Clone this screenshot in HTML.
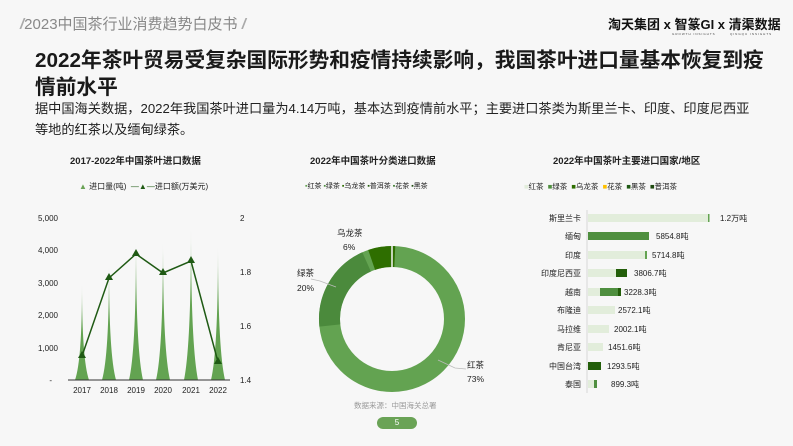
<!DOCTYPE html>
<html><head><meta charset="utf-8"><style>
body{margin:0;width:793px;height:446px;background:#f7f7f7;font-family:"Liberation Sans","Noto Sans CJK SC",sans-serif;position:relative;overflow:hidden;color:#222}
.a{position:absolute;white-space:nowrap}
</style></head><body>
<div class="a" style="left:20px;top:13px;font-size:15px;color:#888"><span style="color:#aaa;font-style:italic;font-weight:bold">/</span>2023中国茶行业消费趋势白皮书 <span style="color:#aaa;font-style:italic;font-weight:bold">/</span></div>
<div class="a" style="left:608px;top:14px;font-size:13px;font-weight:bold;color:#111">淘天集团 x 智篆GI x 清渠数据</div>
<div class="a" style="left:672px;top:32px;font-size:3px;color:#444;letter-spacing:1px">GROWTH INSIGHTS</div>
<div class="a" style="left:730px;top:32px;font-size:3px;color:#444;letter-spacing:1px">QINGQU INSIGHTS</div>
<div class="a" style="left:35px;top:47px;font-size:20.7px;font-weight:bold;line-height:27px;color:#1a1a1a;white-space:normal;width:745px">2022年茶叶贸易受复杂国际形势和疫情持续影响，我国茶叶进口量基本恢复到疫情前水平</div>
<div class="a" style="left:35px;top:98px;font-size:13.2px;line-height:21px;color:#222;white-space:normal;width:722px">据中国海关数据，2022年我国茶叶进口量为4.14万吨，基本达到疫情前水平；主要进口茶类为斯里兰卡、印度、印度尼西亚等地的红茶以及缅甸绿茶。</div>

<div class="a" style="left:70px;top:153px;font-size:9.5px;font-weight:bold">2017-2022年中国茶叶进口数据</div>
<div class="a" style="left:79px;top:181px;font-size:8px"><span style="color:#6aa356">▲</span> 进口量(吨) &nbsp;<span style="color:#1f5a14">—▲—</span>进口额(万美元)</div>
<svg class="a" style="left:0;top:0" width="793" height="446">
<g font-size="8" fill="#222" font-family="Liberation Sans,sans-serif">
<text x="58" y="221" text-anchor="end">5,000</text><text x="58" y="253" text-anchor="end">4,000</text><text x="58" y="286" text-anchor="end">3,000</text><text x="58" y="318" text-anchor="end">2,000</text><text x="58" y="351" text-anchor="end">1,000</text><text x="52" y="383" text-anchor="end">-</text>
<text x="240" y="221">2</text><text x="240" y="275">1.8</text><text x="240" y="329">1.6</text><text x="240" y="383">1.4</text>
<text x="82" y="393" text-anchor="middle">2017</text><text x="109" y="393" text-anchor="middle">2018</text><text x="136" y="393" text-anchor="middle">2019</text><text x="163" y="393" text-anchor="middle">2020</text><text x="191" y="393" text-anchor="middle">2021</text><text x="218" y="393" text-anchor="middle">2022</text>
</g>
<g fill="#63a351">
<path d="M75 380 Q82 360 82 285 Q82 360 89 380Z"/><path d="M102 380 Q109 355 109 267 Q109 355 116 380Z"/><path d="M129 380 Q136 350 136 242 Q136 350 143 380Z"/><path d="M156 380 Q163 350 163 242 Q163 350 170 380Z"/><path d="M184 380 Q191 345 191 230 Q191 345 198 380Z"/><path d="M211 380 Q218 350 218 247 Q218 350 225 380Z"/>
</g>
<line x1="68" y1="380" x2="230" y2="380" stroke="#333" stroke-width="1"/>
<polyline points="82,356 109,278 136,254 163,273 191,261 218,362" fill="none" stroke="#1f5a14" stroke-width="1.5"/>
<g fill="#1f5a14"><path d="M82 351 l4 7 h-8z"/><path d="M109 273 l4 7 h-8z"/><path d="M136 249 l4 7 h-8z"/><path d="M163 268 l4 7 h-8z"/><path d="M191 256 l4 7 h-8z"/><path d="M218 357 l4 7 h-8z"/></g>

<g transform="translate(392,319)" fill="none" stroke-width="21">
<circle r="62.5" stroke="#63a351"/>
<circle r="62.5" stroke="#4b8a3c" stroke-dasharray="78.5 400" transform="rotate(174)"/>
<circle r="62.5" stroke="#2e6e00" stroke-dasharray="23.5 400" transform="rotate(251)"/>
<line x1="0" y1="-52" x2="0" y2="-73" stroke="#f7f7f7" stroke-width="1.5"/>
</g>
<polyline points="311,279 320,281 336,287" fill="none" stroke="#bbb" stroke-width="0.8"/>
<polyline points="438,360 455,368 466,369" fill="none" stroke="#bbb" stroke-width="0.8"/>
<g font-size="8.5" fill="#222" font-family="Liberation Sans,Noto Sans CJK SC,sans-serif">
<text x="337" y="236">乌龙茶</text><text x="343" y="250">6%</text>
<text x="297" y="276">绿茶</text><text x="297" y="291">20%</text>
<text x="467" y="368">红茶</text><text x="467" y="382">73%</text>
</g>
<line x1="587" y1="210" x2="587" y2="393" stroke="#ddd" stroke-width="1.2"/>
<g>
<rect x="588" y="214" width="120" height="8" fill="#e2eddb"/><rect x="708" y="214" width="1.5" height="8" fill="#63a351"/>
<rect x="588" y="232" width="61" height="8" fill="#4f8f3f"/>
<rect x="588" y="251" width="58" height="8" fill="#e2eddb"/><rect x="645" y="251" width="2" height="8" fill="#63a351"/>
<rect x="588" y="269" width="28" height="8" fill="#e2eddb"/><rect x="616" y="269" width="11" height="8" fill="#235e0a"/>
<rect x="588" y="288" width="12" height="8" fill="#e2eddb"/><rect x="600" y="288" width="18" height="8" fill="#4f8f3f"/><rect x="618" y="288" width="3" height="8" fill="#235e0a"/>
<rect x="588" y="306" width="27" height="8" fill="#e2eddb"/>
<rect x="588" y="325" width="21" height="8" fill="#e2eddb"/>
<rect x="588" y="343" width="15" height="8" fill="#e2eddb"/>
<rect x="588" y="362" width="13" height="8" fill="#235e0a"/>
<rect x="588" y="380" width="6" height="8" fill="#e2eddb"/><rect x="594" y="380" width="3" height="8" fill="#4f8f3f"/>
</g>
<g font-size="8" fill="#222" font-family="Liberation Sans,Noto Sans CJK SC,sans-serif">
<text x="581" y="221" text-anchor="end">斯里兰卡</text><text x="581" y="239" text-anchor="end">缅甸</text><text x="581" y="258" text-anchor="end">印度</text><text x="581" y="276" text-anchor="end">印度尼西亚</text><text x="581" y="295" text-anchor="end">越南</text><text x="581" y="313" text-anchor="end">布隆迪</text><text x="581" y="332" text-anchor="end">马拉维</text><text x="581" y="350" text-anchor="end">肯尼亚</text><text x="581" y="369" text-anchor="end">中国台湾</text><text x="581" y="387" text-anchor="end">泰国</text>
<text x="720" y="221">1.2万吨</text><text x="656" y="239">5854.8吨</text><text x="652" y="258">5714.8吨</text><text x="634" y="276">3806.7吨</text><text x="624" y="295">3228.3吨</text><text x="618" y="313">2572.1吨</text><text x="614" y="332">2002.1吨</text><text x="608" y="350">1451.6吨</text><text x="607" y="369">1293.5吨</text><text x="611" y="387">899.3吨</text>
</g>
</svg>
<div class="a" style="left:310px;top:153px;font-size:9.5px;font-weight:bold">2022年中国茶叶分类进口数据</div>
<div class="a" style="left:305px;top:181px;font-size:7px"><span style="color:#63a351">▪</span>红茶 <span style="color:#4f8f3f">▪</span>绿茶 <span style="color:#2e6e00">▪</span>乌龙茶 <span style="color:#235e0a">▪</span>普洱茶 <span style="color:#3a7a2a">▪</span>花茶 <span style="color:#1f4a10">▪</span>黑茶</div>
<div class="a" style="left:553px;top:153px;font-size:9.5px;font-weight:bold">2022年中国茶叶主要进口国家/地区</div>
<div class="a" style="left:524px;top:181px;font-size:7.5px"><span style="color:#e2eddb">■</span>红茶 &nbsp;<span style="color:#4f8f3f">■</span>绿茶 &nbsp;<span style="color:#2e6e00">■</span>乌龙茶 &nbsp;<span style="color:#ffc000">■</span>花茶 &nbsp;<span style="color:#1f5a14">■</span>黑茶 &nbsp;<span style="color:#1f4a10">■</span>普洱茶</div>
<div class="a" style="left:354px;top:400px;font-size:7.5px;color:#999">数据来源：中国海关总署</div>
<div class="a" style="left:377px;top:417px;width:40px;height:12px;border-radius:6px;background:#6aa356;color:#fff;font-size:8px;text-align:center;line-height:12px">5</div>
</body></html>
